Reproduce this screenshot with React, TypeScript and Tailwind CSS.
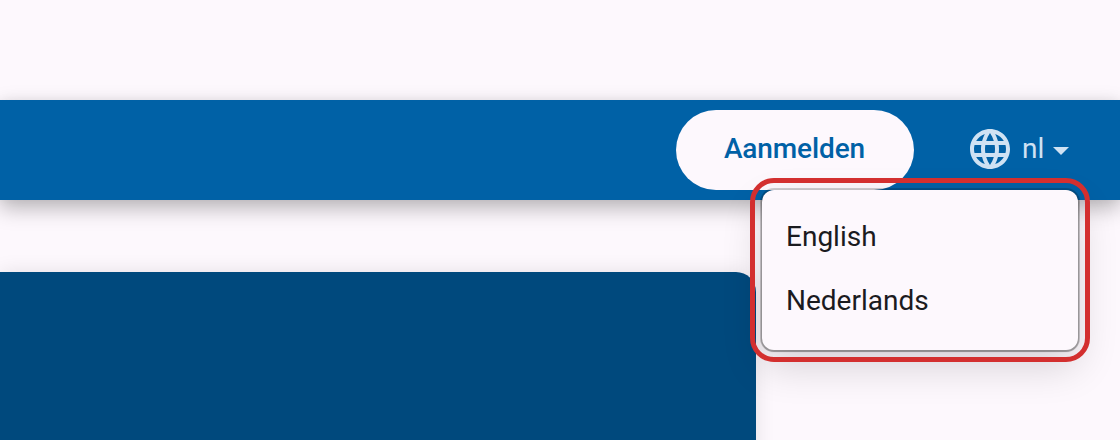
import React from 'react';
import { MdLanguage } from 'react-icons/md';

const languages = ['English', 'Nederlands'];

export default function App() {
  return (
    <div className="relative w-[1120px] h-[440px] overflow-hidden bg-[#fdf8fd] font-['Roboto',sans-serif]">
      <div className="h-[100px]" />

      {/* Top bar */}
      <header className="relative z-10 h-[100px] bg-[#0061a6] flex items-center justify-end shadow-[0_8px_20px_rgba(0,0,0,0.28),0_0_10px_rgba(0,0,0,0.04)]">
        <button className="w-[238px] h-[80px] pb-[2px] pr-[1px] rounded-full bg-[#fdf8fd] text-[#0061a6] text-[28px] font-medium tracking-[-0.1px]">
          Aanmelden
        </button>
        <div className="w-[206px] flex items-center pl-[52px] text-[#cfe2f3]">
          <MdLanguage size={48} className="shrink-0 -mt-[2px]" />
          <span className="ml-[8px] pb-[2px] text-[28px]">nl</span>
          <svg width="16" height="8" viewBox="0 0 16 8" className="ml-[9px] mt-[1px]">
            <path d="M0 0h16L8 8z" fill="currentColor" />
          </svg>
        </div>
      </header>

      {/* Page content */}
      <main className="pt-[72px]">
        <div className="w-[756px] h-[200px] bg-[#00497d] rounded-tr-[20px] shadow-[0_0_20px_rgba(0,0,0,0.1)]" />
      </main>

      {/* Language menu */}
      <div className="absolute z-20 left-[762px] top-[190px] w-[316px] h-[160px] pt-[15px] rounded-[12px] bg-[#fdf8fd] text-[#1b1b1f] text-[28px] shadow-[0_1px_1px_1px_rgba(0,0,0,0.22),0_0_0_2px_rgba(0,0,0,0.18),0_16px_40px_rgba(0,0,0,0.16)]">
        {languages.map(lang => (
          <div key={lang} className="h-[64px] px-[24px] flex items-center">{lang}</div>
        ))}
      </div>

      {/* Highlight */}
      <div className="absolute z-30 left-[750px] top-[178px] w-[340px] h-[184px] rounded-[24px] border-[5px] border-[#d32f2f]" />
    </div>
  );
}
